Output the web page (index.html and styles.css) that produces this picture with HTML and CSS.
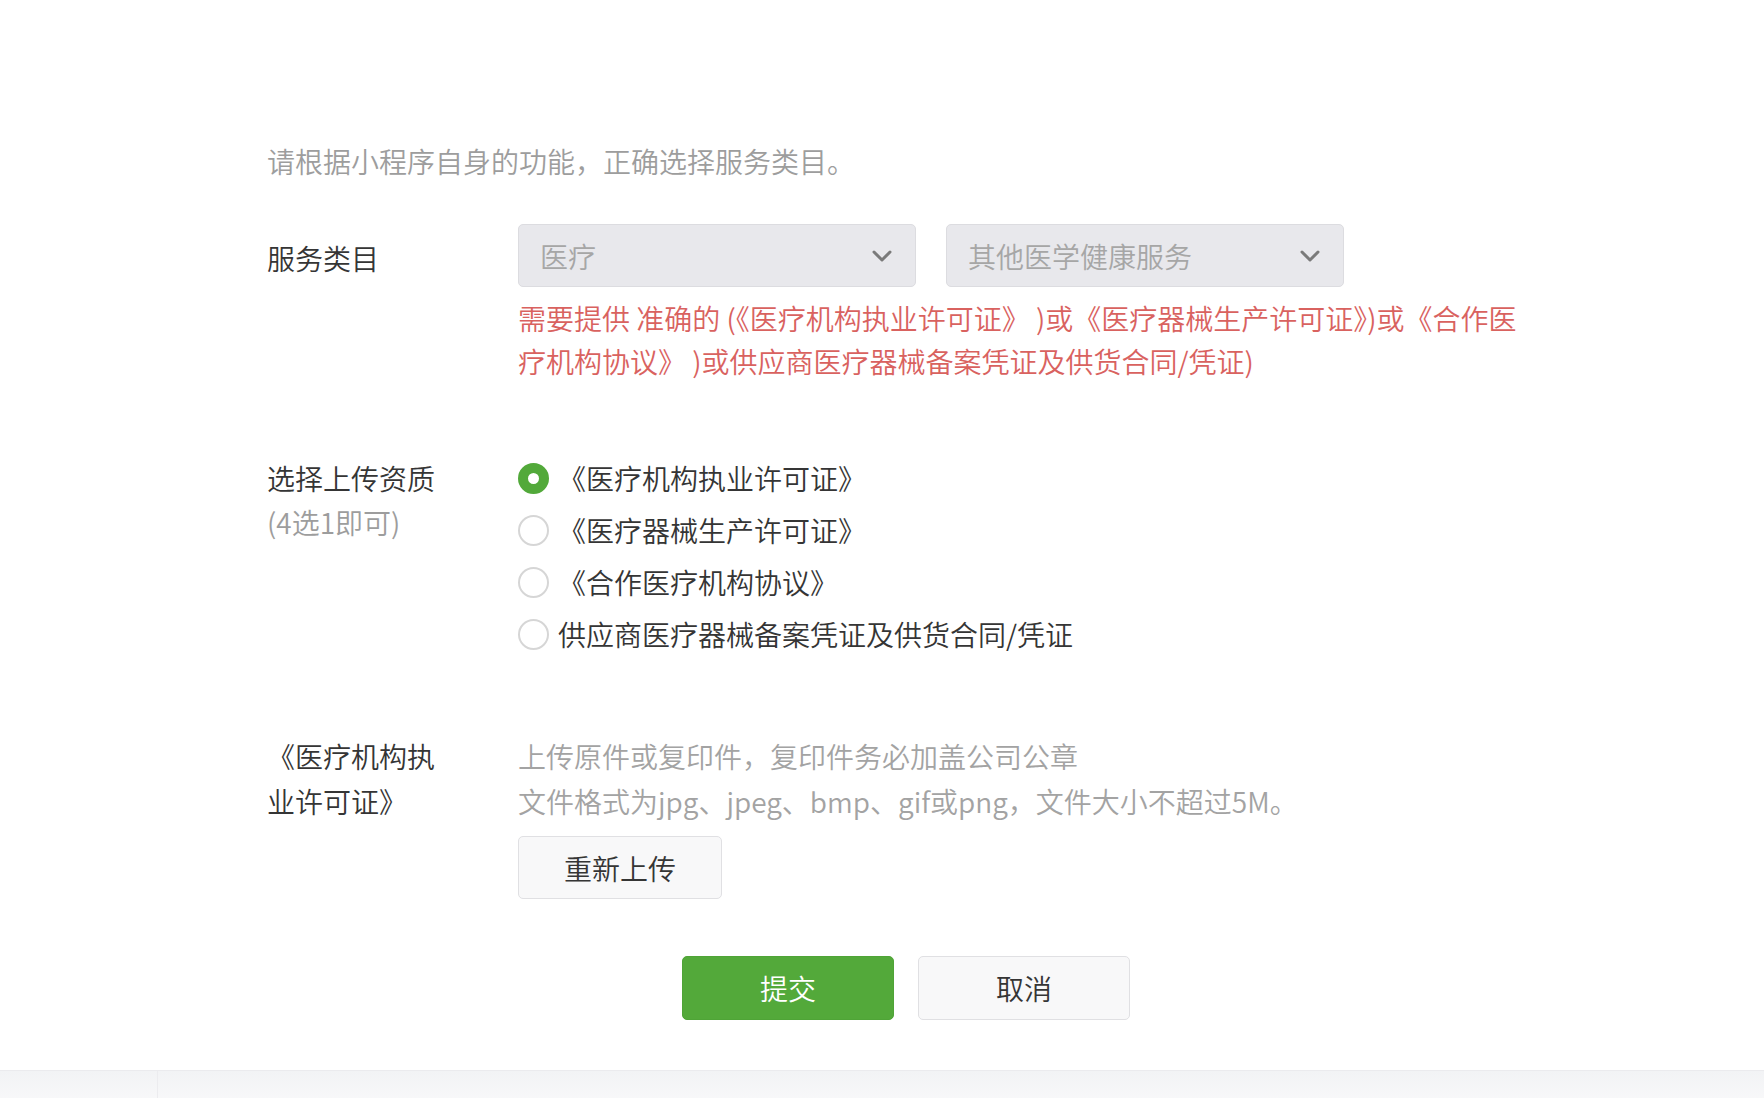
FILE: index.html
```html
<!DOCTYPE html>
<html lang="zh-CN">
<head>
<meta charset="utf-8">
<title>服务类目</title>
<link rel="stylesheet" href="styles.css">
</head>
<body>
<div class="page">
  <main class="content">
    <p class="intro">请根据小程序自身的功能，正确选择服务类目。</p>

    <div class="row row-category">
      <div class="label label-single">服务类目</div>
      <div class="field">
        <div class="selects">
          <div class="select">
            <span>医疗</span>
            <svg class="chevron" width="20" height="12" viewBox="0 0 20 12"><path d="M2 2l8 8 8-8" fill="none" stroke="#7a7a7a" stroke-width="3" stroke-linecap="round" stroke-linejoin="round"/></svg>
          </div>
          <div class="select">
            <span>其他医学健康服务</span>
            <svg class="chevron" width="20" height="12" viewBox="0 0 20 12"><path d="M2 2l8 8 8-8" fill="none" stroke="#7a7a7a" stroke-width="3" stroke-linecap="round" stroke-linejoin="round"/></svg>
          </div>
        </div>
        <p class="warn">需要提供 准确的 (《医疗机构执业许可证》 )或《医疗器械生产许可证》)或《合作医疗机构协议》 )或供应商医疗器械备案凭证及供货合同/凭证)</p>
      </div>
    </div>

    <div class="row row-qual">
      <div class="label">
        <div class="label-main">选择上传资质</div>
        <div class="label-sub">(4选1即可)</div>
      </div>
      <div class="field">
        <ul class="radios">
          <li class="radio-item"><span class="radio checked"></span><span>《医疗机构执业许可证》</span></li>
          <li class="radio-item"><span class="radio"></span><span>《医疗器械生产许可证》</span></li>
          <li class="radio-item"><span class="radio"></span><span>《合作医疗机构协议》</span></li>
          <li class="radio-item"><span class="radio"></span><span>供应商医疗器械备案凭证及供货合同/凭证</span></li>
        </ul>
      </div>
    </div>

    <div class="row row-upload">
      <div class="label label-upload">《医疗机构执业许可证》</div>
      <div class="field">
        <p class="hint">上传原件或复印件，复印件务必加盖公司公章<br>文件格式为jpg、jpeg、bmp、gif或png，文件大小不超过5M。</p>
        <button class="btn btn-default btn-reupload" type="button">重新上传</button>
      </div>
    </div>

    <div class="actions">
      <button class="btn btn-primary" type="button">提交</button>
      <button class="btn btn-default" type="button">取消</button>
    </div>
  </main>
  <footer class="footer">
    <div class="footer-side"></div>
    <div class="footer-main"></div>
  </footer>
</div>
</body>
</html>
```
FILE: styles.css
```css
html, body {
  margin: 0;
  padding: 0;
  background: #ffffff;
}

body {
  font-family: "Noto Sans CJK SC", "Noto Sans", sans-serif;
  font-size: 28px;
  font-weight: 350;
  color: #353535;
  overflow: hidden;
}

.page {
  width: 100%;
}

.content {
  width: 1278px;
  margin-left: 267px;
  padding-top: 141px;
}

.intro {
  margin: 0;
  font-size: 28px;
  line-height: 40px;
  color: #9d9d9d;
}

.row {
  display: flex;
}

.label {
  flex: none;
  width: 190px;
  margin-right: 61px;
  color: #353535;
  font-size: 28px;
}

.field {
  flex: 1;
  min-width: 0;
}

/* category row */
.row-category {
  margin-top: 43px;
}

.label-single {
  line-height: 63px;
  padding-top: 3px;
}

.selects {
  display: flex;
  gap: 30px;
}

.select {
  box-sizing: border-box;
  width: 398px;
  height: 63px;
  display: flex;
  align-items: center;
  justify-content: space-between;
  padding: 0 23px 0 21px;
  background: #e8e8ec;
  border: 1px solid #dcdce0;
  border-radius: 5px;
  color: #a6a6a6;
  font-size: 28px;
}

.chevron {
  flex: none;
}

.warn {
  margin: 10px 0 0;
  padding-right: 20px;
  color: #d9625f;
  font-size: 28px;
  line-height: 43px;
}

/* qualification row */
.row-qual {
  margin-top: 69px;
}

.label-main {
  line-height: 52px;
}

.label-sub {
  line-height: 36px;
  color: #9d9d9d;
}

.radios {
  list-style: none;
  margin: 0;
  padding: 0;
}

.radio-item {
  display: flex;
  align-items: center;
  height: 52px;
  font-size: 28px;
  color: #353535;
}

.radio {
  flex: none;
  box-sizing: border-box;
  width: 31px;
  height: 31px;
  margin-right: 9px;
  border-radius: 50%;
  border: 2px solid #d6d6d6;
  background: #ffffff;
}

.radio.checked {
  border: 10px solid #52a93a;
}

/* upload row */
.row-upload {
  margin-top: 74px;
}

.label-upload {
  line-height: 45px;
}

.hint {
  margin: 0;
  color: #a3a3a3;
  font-size: 28px;
  line-height: 45px;
}

.btn {
  box-sizing: border-box;
  display: flex;
  align-items: center;
  justify-content: center;
  width: 212px;
  height: 64px;
  padding: 0;
  border-radius: 5px;
  font-family: inherit;
  font-size: 28px;
  font-weight: 350;
  cursor: pointer;
}

.btn-default {
  background: #f8f8f9;
  border: 1px solid #e0e0e3;
  color: #353535;
}

.btn-primary {
  background: #53a93a;
  border: 1px solid #4fa437;
  color: #ffffff;
}

.btn-reupload {
  width: 204px;
  height: 63px;
  margin-top: 12px;
}

.actions {
  display: flex;
  justify-content: center;
  gap: 24px;
  margin-top: 57px;
}

.footer {
  display: flex;
  margin-top: 50px;
  height: 40px;
  border-top: 1px solid #ebebee;
  background: linear-gradient(#f2f3f5, #fafafb);
}

.footer-side {
  width: 157px;
  border-right: 1px solid #ececef;
}

.footer-main {
  flex: 1;
}
```
